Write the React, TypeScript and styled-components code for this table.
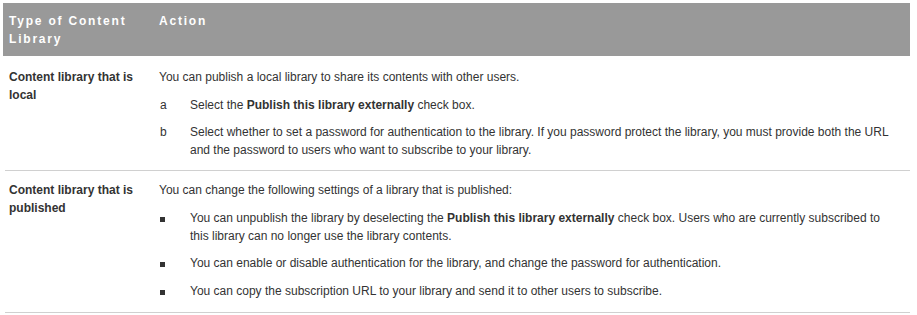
import React from "react";
import styled, { createGlobalStyle } from "styled-components";

const Global = createGlobalStyle`
  html, body { margin: 0; padding: 0; background: #ffffff; }
  body { font-family: "Liberation Sans", Arial, sans-serif; color: #333333; }
`;

const Page = styled.div`
  padding: 3px 7px 0 3px;
`;

const Table = styled.div`
  display: grid;
  grid-template-columns: 156px 1fr;
  width: 907px;
`;

const HeadCell = styled.div<{ $first?: boolean }>`
  background: #999999;
  color: #ffffff;
  font-weight: bold;
  font-size: 12px;
  line-height: 18px;
  letter-spacing: 1.8px;
  padding: 9px 6px 8px ${(p) => (p.$first ? "6px" : "0")};
  min-height: 36px;
`;

const Row = styled.div<{ $top: number; $bottom: number }>`
  grid-column: 1 / -1;
  display: grid;
  grid-template-columns: 156px 1fr;
  margin-left: 2px;
  border-bottom: 1px solid #d0d0d0;
  padding: ${(p) => `${p.$top}px 0 ${p.$bottom}px 0`};
`;

const TypeCell = styled.div`
  font-weight: bold;
  font-size: 12px;
  line-height: 18px;
  padding-left: 4px;
  padding-right: 10px;
`;

const ActionCell = styled.div`
  font-size: 12px;
  line-height: 18px;
  display: flex;
  flex-direction: column;
  gap: 9.6px;
  margin-left: -2px;
`;

const Para = styled.p`
  margin: 0;
`;

const Item = styled.div`
  display: grid;
  grid-template-columns: 31px 1fr;
  padding-right: 20px;
`;

const Marker = styled.span`
  padding-left: 1px;
`;

const Square = styled.span`
  display: block;
  width: 5px;
  height: 5px;
  background: #333333;
  margin: 8px 0 0 1px;
`;

export default function App() {
  return (
    <Page>
      <Global />
      <Table>
        <HeadCell $first>Type of Content Library</HeadCell>
        <HeadCell>Action</HeadCell>
        <Row $top={12} $bottom={11}>
          <TypeCell>Content library that is local</TypeCell>
          <ActionCell>
            <Para>You can publish a local library to share its contents with other users.</Para>
            <Item>
              <Marker>a</Marker>
              <span>
                Select the <b>Publish this library externally</b> check box.
              </span>
            </Item>
            <Item>
              <Marker>b</Marker>
              <span>
                Select whether to set a password for authentication to the library. If you password
                protect the library, you must provide both the URL and the password to users who want
                to subscribe to your library.
              </span>
            </Item>
          </ActionCell>
        </Row>
        <Row $top={10} $bottom={12}>
          <TypeCell>Content library that is published</TypeCell>
          <ActionCell>
            <Para>You can change the following settings of a library that is published:</Para>
            <Item>
              <Square />
              <span>
                You can unpublish the library by deselecting the <b>Publish this library externally</b>{" "}
                check box. Users who are currently subscribed to this library can no longer use the
                library contents.
              </span>
            </Item>
            <Item>
              <Square />
              <span>You can enable or disable authentication for the library, and change the password for authentication.</span>
            </Item>
            <Item>
              <Square />
              <span>You can copy the subscription URL to your library and send it to other users to subscribe.</span>
            </Item>
          </ActionCell>
        </Row>
      </Table>
    </Page>
  );
}
